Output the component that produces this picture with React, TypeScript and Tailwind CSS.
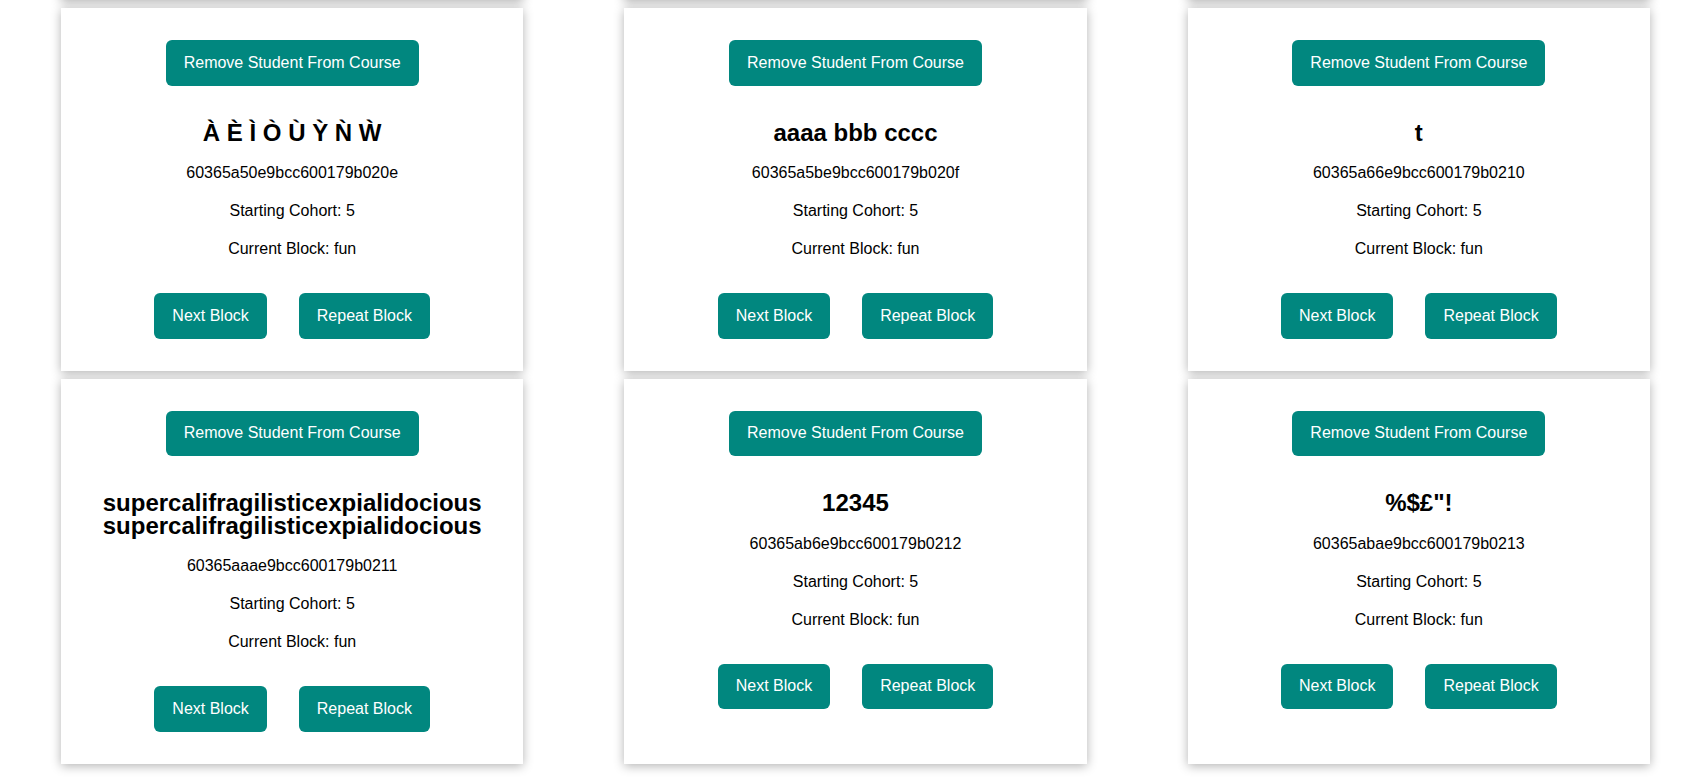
import React from "react";

type Student = { name: string; id: string };

const students: Student[] = [
  { name: "À È Ì Ò Ù Ỳ Ǹ Ẁ", id: "60365a50e9bcc600179b020e" },
  { name: "aaaa bbb cccc", id: "60365a5be9bcc600179b020f" },
  { name: "t", id: "60365a66e9bcc600179b0210" },
  { name: "supercalifragilisticexpialidocious supercalifragilisticexpialidocious", id: "60365aaae9bcc600179b0211" },
  { name: "12345", id: "60365ab6e9bcc600179b0212" },
  { name: '%$£"!', id: "60365abae9bcc600179b0213" },
];

const btn =
  "h-[45.5px] px-[18px] rounded-[6px] bg-[#01877f] text-white text-[16px] leading-[18px] whitespace-nowrap";

const shadow = "shadow-[0_2px_10px_rgba(0,0,0,0.3)]";

function Card({ s }: { s: Student }) {
  return (
    <div className={`bg-white ${shadow} pt-8 pb-8 px-4 flex flex-col items-center text-center text-black`}>
      <button className={btn}>Remove Student From Course</button>
      <h2 className="mt-[36px] text-[24px] leading-[22.6px] font-bold">{s.name}</h2>
      <p className="mt-5 text-[16px] leading-[18px]">{s.id}</p>
      <p className="mt-5 text-[16px] leading-[18px]">Starting Cohort: 5</p>
      <p className="mt-5 text-[16px] leading-[18px]">Current Block: fun</p>
      <div className="mt-[35px] flex gap-8">
        <button className={btn}>Next Block</button>
        <button className={btn}>Repeat Block</button>
      </div>
    </div>
  );
}

export default function App() {
  return (
    <div
      className="w-[1684px] h-[780px] overflow-hidden bg-white"
      style={{ fontFamily: '"Liberation Sans", Arial, sans-serif' }}
    >
      <div className="ml-[61px] -mt-[40px] w-[1589px] grid grid-cols-3 gap-x-[101px] gap-y-2 items-stretch">
        <div className={`h-[40px] bg-white ${shadow}`} />
        <div className={`h-[40px] bg-white ${shadow}`} />
        <div className={`h-[40px] bg-white ${shadow}`} />
        {students.map((s) => (
          <Card key={s.id} s={s} />
        ))}
      </div>
    </div>
  );
}
